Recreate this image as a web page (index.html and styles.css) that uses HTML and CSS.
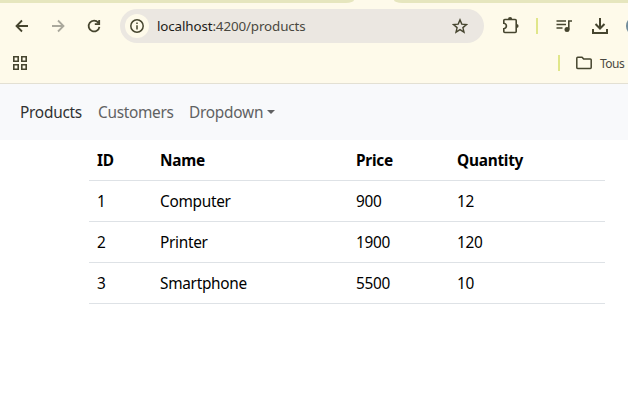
FILE: index.html
```
<!DOCTYPE html>
<html lang="fr">
<head>
<meta charset="utf-8">
<title>Products</title>
<link rel="stylesheet" href="styles.css">
</head>
<body>
<header class="browser">
  <div class="tabstrip"><span class="tabs-left"></span><span class="tabs-right"></span></div>
  <div class="chrome">
    <div class="toolbar">
      <svg class="icon back" viewBox="0 0 20 20"><path d="M16 10H5M10 4.500L4.500 10l5.500 5.500"/></svg>
      <svg class="icon forward" viewBox="0 0 20 20"><path d="M4 10h11M10 4.500L15.500 10 10 15.500"/></svg>
      <svg class="icon reload" viewBox="0 0 20 20"><path d="M14.300 6.700A5.400 5.400 0 1 0 15.400 10.800M15.200 4v4.200H10.800"/></svg>
      <div class="omnibox">
        <span class="site-info"><svg class="info" viewBox="0 0 14 14"><circle cx="7" cy="7" r="6.200"/><path d="M7 6.200v4.200M7 3.500v1.500"/></svg></span>
        <span class="url"><span class="host">localhost</span>:4200/products</span>
        <svg class="star" viewBox="0 0 16 16"><path d="M8 1.900l1.800 4.200 4.700.4-3.600 3.100 1.100 4.600L8 11.700l-4 2.500 1.100-4.600-3.600-3.100 4.700-.4z"/></svg>
      </div>
      <svg class="icon puzzle" viewBox="0 0 20 20"><path d="M4.800 3.500H15.200Q16.200 3.500 16.200 4.500V15.500Q16.200 16.500 15.200 16.500H4.800Q3.800 16.500 3.800 15.500V12.700Q6.400 12.300 6.400 10T3.800 7.300V4.500Q3.800 3.500 4.800 3.500z"/><path class="solid" d="M8 3.200a2.100 2.100 0 0 1 4.200 0zM16.500 7.900a2.100 2.100 0 0 1 0 4.200z"/></svg>
      <span class="divider"></span>
      <svg class="icon queue" viewBox="0 0 20 20"><path d="M2.500 5h9.500M2.500 8.500h9.500M2.500 12h6M14.800 13.500V5h3.200"/><circle class="solid" cx="13" cy="13.500" r="2.500"/></svg>
      <svg class="icon download" viewBox="0 0 20 20"><path d="M10 2v10M5.500 8l4.500 4.500L14.500 8M3 13v4h14v-4"/></svg>
      <span class="avatar"></span>
    </div>
    <div class="bookmarks">
      <svg class="grid" viewBox="0 0 14 14"><path d="M.8.800h4.400v4.400H.8zM8.800.800h4.400v4.400H8.800zM.8 8.800h4.400v4.400H.8zM8.800 8.800h4.400v4.400H8.800z"/></svg>
      <span class="divider"></span>
      <svg class="folder" viewBox="0 0 16 14"><path d="M.8 2.200Q.8 1.300 1.700 1.300H6l1.600 1.600h6.700q.9 0 .9.900v7.700q0 .9-.9.900H1.700q-.9 0-.9-.9z"/></svg>
      <span class="bookmark-label">Tous</span>
    </div>
  </div>
</header>
<nav class="navbar">
  <a class="link active">Products</a>
  <a class="link customers">Customers</a>
  <a class="link dropdown">Dropdown</a>
</nav>
<main>
  <table class="table">
    <colgroup><col class="c-id"><col class="c-name"><col class="c-price"><col class="c-qty"></colgroup>
    <thead><tr><th>ID</th><th>Name</th><th>Price</th><th>Quantity</th></tr></thead>
    <tbody>
      <tr><td>1</td><td>Computer</td><td>900</td><td>12</td></tr>
      <tr><td>2</td><td>Printer</td><td>1900</td><td>120</td></tr>
      <tr><td>3</td><td>Smartphone</td><td>5500</td><td>10</td></tr>
    </tbody>
  </table>
</main>
</body>
</html>
```
FILE: styles.css
```
* { box-sizing: border-box; }
body {
  margin: 0;
  overflow: hidden;
  background: #fff;
  color: #000;
  font-family: "Noto Sans", "Open Sans", sans-serif;
  font-size: 15.4px;
}
svg {
  flex: none;
  fill: none;
  stroke: #46452f;
  stroke-width: 1.6;
}
.browser { height: 84px; background: #fefaea; border-bottom: 1px solid #e3e0d3; }
.tabstrip { display: flex; justify-content: space-between; height: 3px; }
.tabs-left, .tabs-right { background: #e6e6be; }
.tabs-left { width: 354px; border-bottom-right-radius: 8px 3px; }
.tabs-right { width: 234px; border-bottom-left-radius: 8px 3px; }
.chrome { height: 80px; }
.toolbar { display: flex; align-items: center; height: 46px; padding-left: 12px; overflow: hidden; }
.icon { width: 20px; height: 20px; }
.back { stroke-width: 1.8; }
.forward { margin-left: 16px; stroke: #aaa89c; stroke-width: 1.8; }
.reload { margin-left: 16px; stroke-width: 1.8; }
.icon .solid { fill: #46452f; stroke: none; }
.omnibox {
  display: flex;
  align-items: center;
  flex: none;
  width: 364px;
  height: 34px;
  margin-left: 16px;
  padding: 0 16px 0 5px;
  border-radius: 17px;
  background: #ebe7e1;
}
.site-info {
  display: flex;
  align-items: center;
  justify-content: center;
  width: 24px;
  height: 24px;
  border-radius: 50%;
  background: #fefaea;
}
.info { width: 14px; height: 14px; stroke-width: 1.5; }
.url { margin-left: 8px; font-size: 13.4px; letter-spacing: -.13px; color: #494740; }
.host { color: #1d1c18; }
.star { width: 16px; height: 16px; margin-left: auto; stroke-width: 1.4; }
.puzzle { margin-left: 16px; }
.divider { flex: none; width: 2px; height: 16px; background: #e0e68a; }
.toolbar .divider { margin-left: 16px; }
.queue { margin-left: 16px; }
.download { margin-left: 16px; stroke-width: 2; }
.avatar { flex: none; width: 20px; height: 20px; margin-left: 16px; border-radius: 50%; background: #718c9b; }
.bookmarks { display: flex; align-items: center; height: 28px; padding-left: 13px; }
.grid { width: 14px; height: 14px; }
.bookmarks .divider { margin-left: 531px; }
.folder { width: 16px; height: 14px; margin-left: 16px; stroke-width: 1.5; }
.bookmark-label { margin-left: 8px; font-size: 12px; letter-spacing: -.5px; color: #494740; }
.navbar { display: flex; align-items: center; height: 56px; padding-left: 20px; background: #f8f9fb; }
.link { width: 78px; color: #606162; letter-spacing: -.3px; }
.active { color: #303132; letter-spacing: -.25px; }
.customers { width: 91px; }
.dropdown { display: flex; align-items: center; width: auto; letter-spacing: -.25px; }
.dropdown::after {
  content: "";
  margin-left: 4px;
  border-top: 4.800px solid;
  border-left: 4.800px solid transparent;
  border-right: 4.800px solid transparent;
}
.table { width: 516px; margin-left: 89px; table-layout: fixed; border-collapse: separate; border-spacing: 0; }
.c-id { width: 63px; }
.c-name { width: 196px; }
.c-price { width: 101px; }
.table th, .table td {
  height: 41px;
  padding: 2px 8px 0;
  border-bottom: 1px solid #dee2e6;
  text-align: left;
  line-height: 24px;
  letter-spacing: -.3px;
}
.table th { letter-spacing: -.25px; }
```
